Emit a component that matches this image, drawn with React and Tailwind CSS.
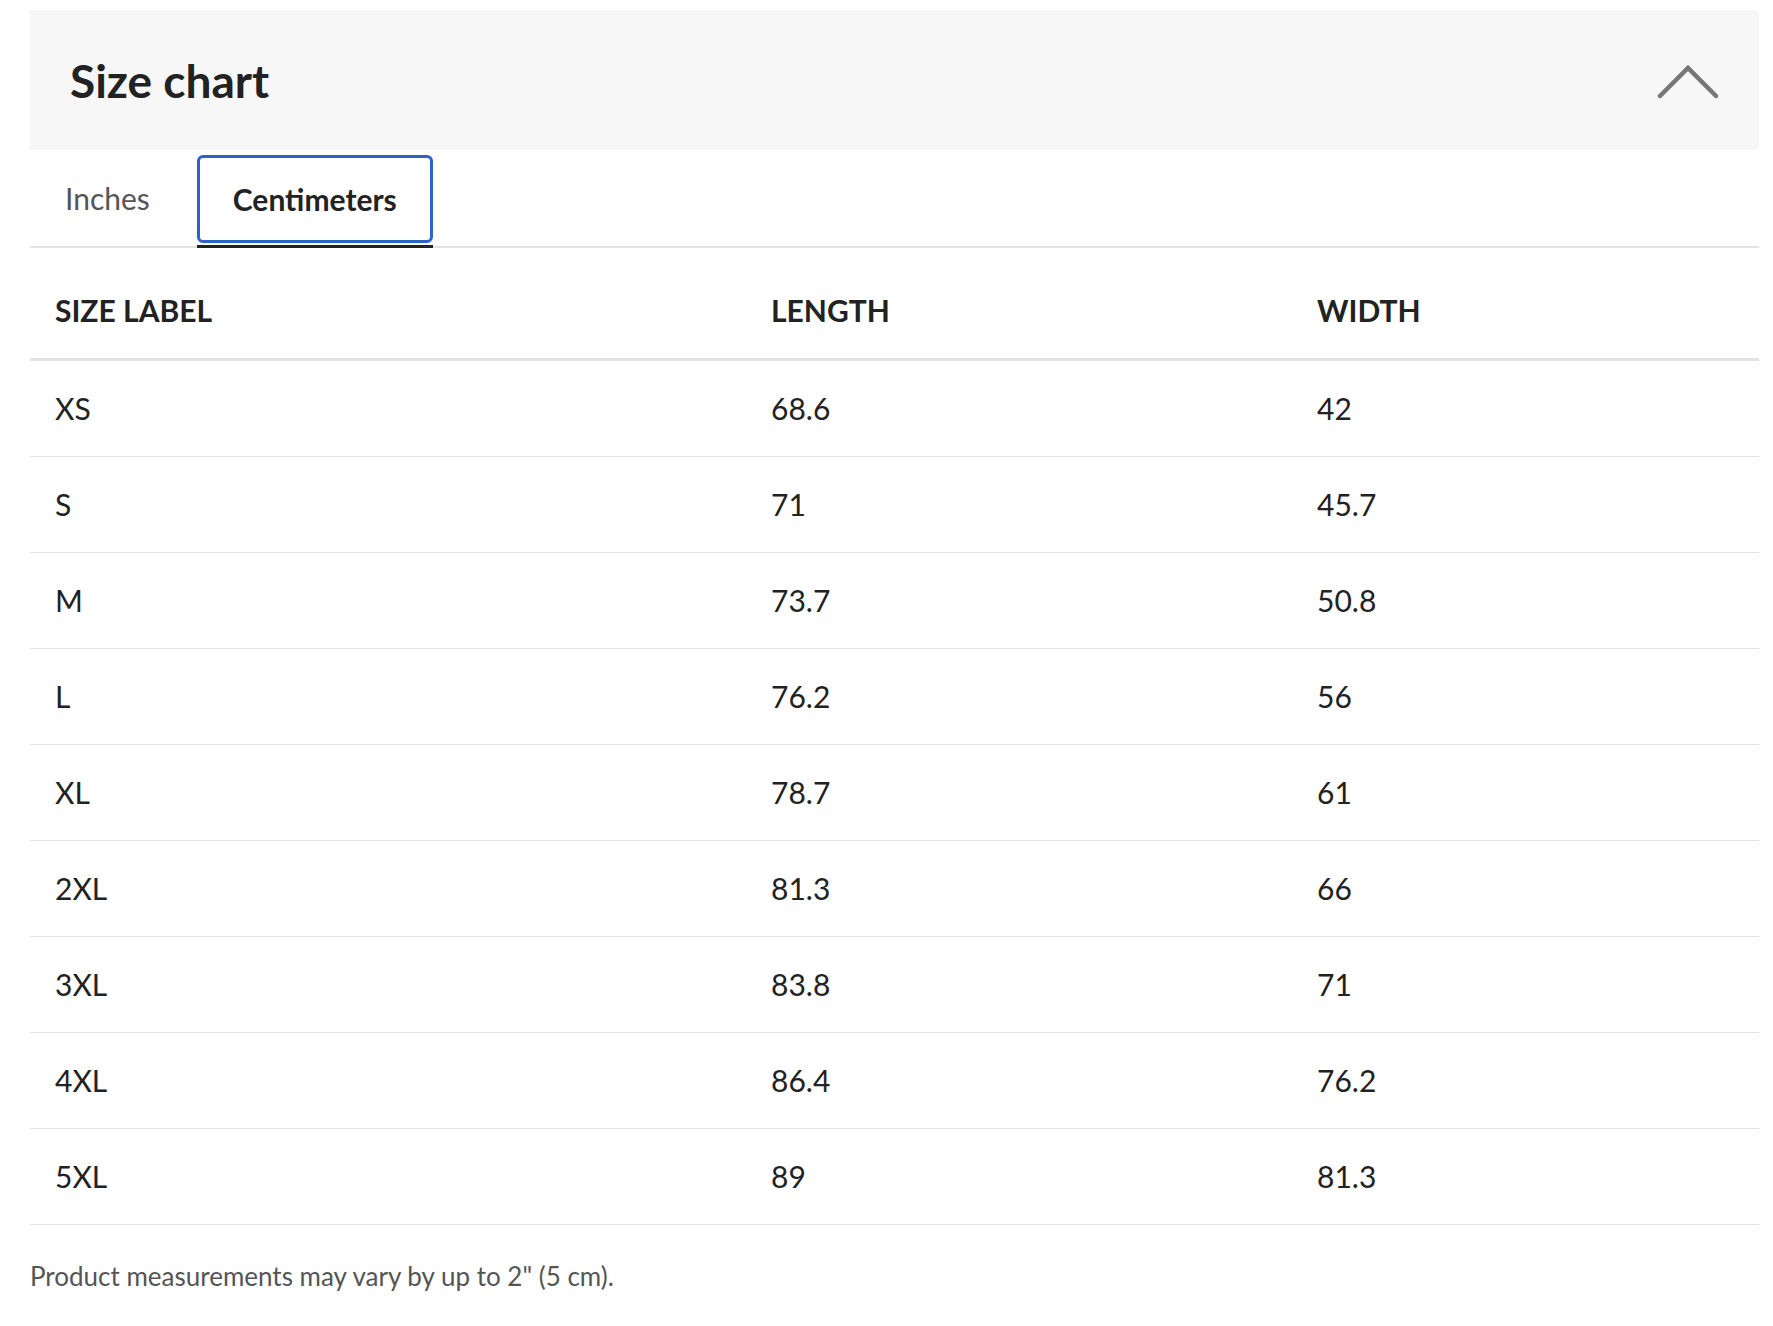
const rows = [
  ["XS", "68.6", "42"],
  ["S", "71", "45.7"],
  ["M", "73.7", "50.8"],
  ["L", "76.2", "56"],
  ["XL", "78.7", "61"],
  ["2XL", "81.3", "66"],
  ["3XL", "83.8", "71"],
  ["4XL", "86.4", "76.2"],
  ["5XL", "89", "81.3"],
];

export default function App() {
  return (
    <div className="bg-white min-h-[1326px] pt-[10px] pl-[30px] pr-[14px] text-[#222] font-[Lato,sans-serif]">
      <div className="w-[1729px]">
        {/* header */}
        <div className="h-[140px] bg-[#f7f7f7] flex items-center justify-between pl-[40px] pr-[40px]">
          <h2 className="text-[46px] font-bold">Size chart</h2>
          <svg width="62" height="40" viewBox="0 0 62 40" className="mt-[6px]">
            <path d="M3 33 L31 5 L59 33" fill="none" stroke="#777" strokeWidth="4.5" strokeLinecap="round" />
          </svg>
        </div>

        {/* tabs */}
        <div className="flex items-end h-[98px] border-b-2 border-[#e4e4e4]">
          <button className="h-[88px] px-[35px] text-[30px] text-[#555] mb-[4px]">Inches</button>
          <div className="border-b-[3px] border-[#222] ml-[12px] mb-[-2px]">
            <button className="h-[88px] w-[236px] mb-[2px] border-[3px] border-[#2b63c9] rounded-[6px] text-[30px] font-bold text-[#222]">
              Centimeters
            </button>
          </div>
        </div>

        {/* table */}
        <div className="grid grid-cols-[716px_546px_1fr] h-[113px] pt-[14px] items-center border-b-[3px] border-[#e2e2e2] text-[30px] font-bold px-[25px]">
          <div>SIZE LABEL</div>
          <div>LENGTH</div>
          <div>WIDTH</div>
        </div>
        {rows.map((r) => (
          <div key={r[0]} className="grid grid-cols-[716px_546px_1fr] h-[96px] items-center border-b border-[#e2e2e2] text-[30px] px-[25px]">
            <div>{r[0]}</div>
            <div>{r[1]}</div>
            <div>{r[2]}</div>
          </div>
        ))}

        <p className="mt-[32px] text-[26px] text-[#555]">Product measurements may vary by up to 2" (5 cm).</p>
      </div>
    </div>
  );
}
